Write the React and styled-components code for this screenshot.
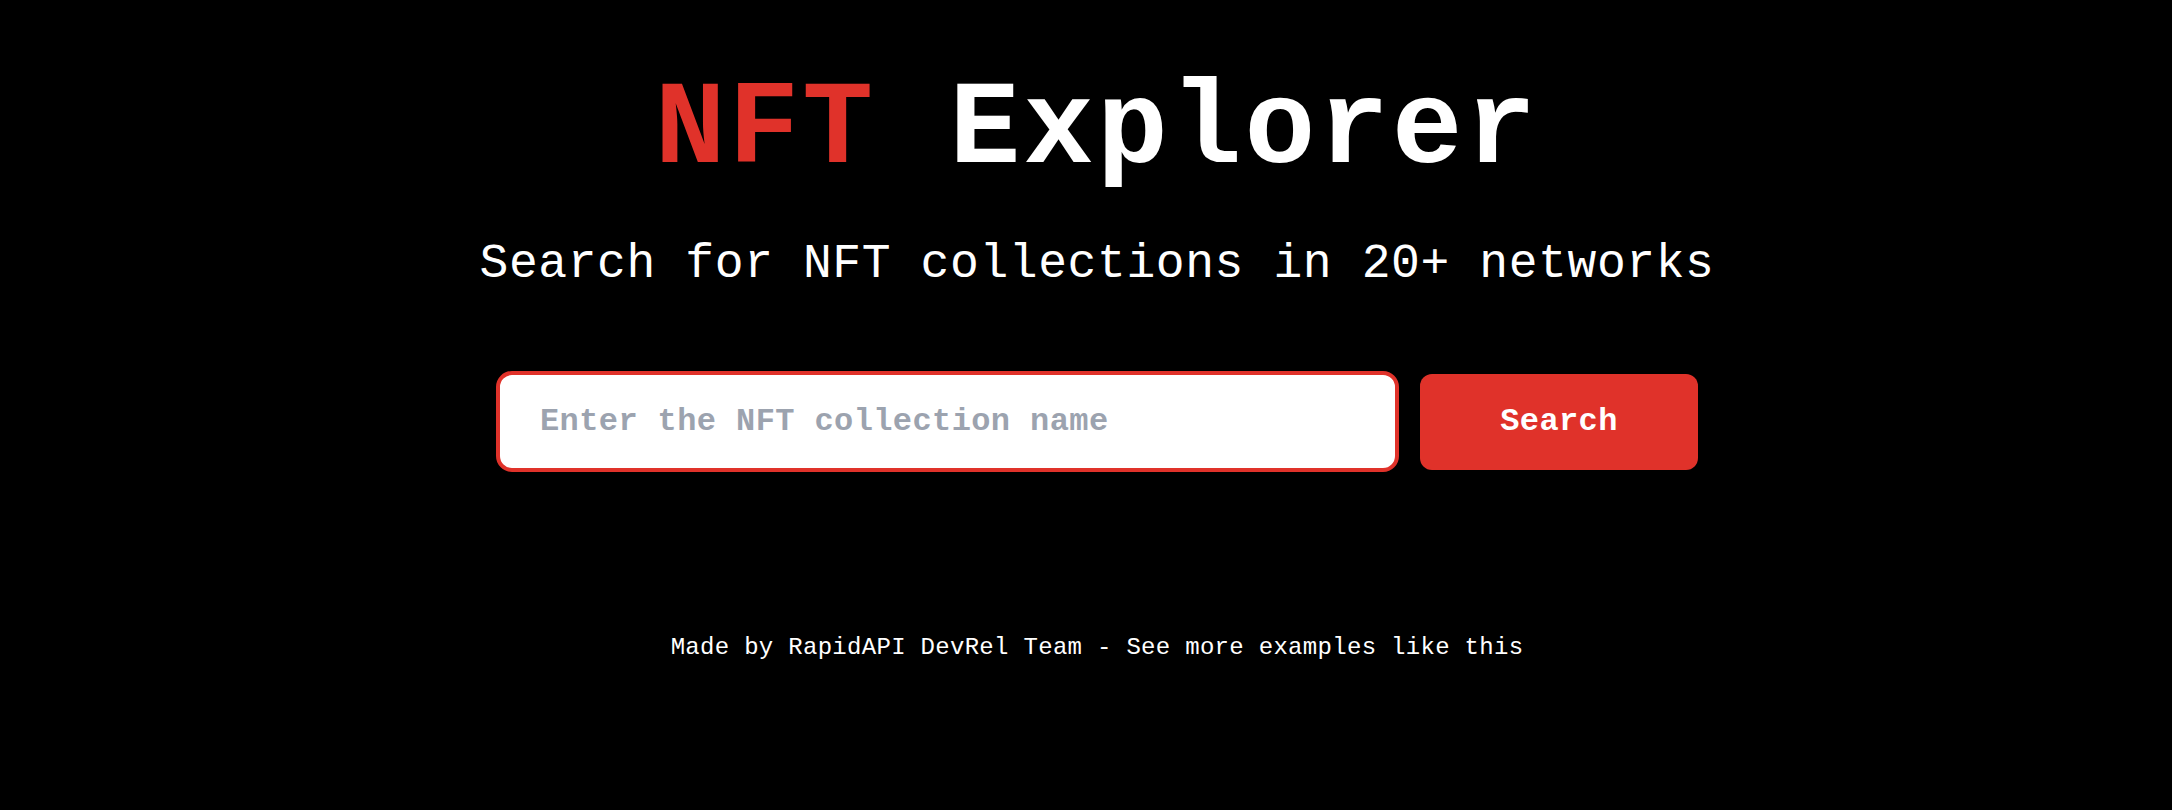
import React from "react";
import styled, { createGlobalStyle } from "styled-components";

const GlobalStyle = createGlobalStyle`
  html, body {
    margin: 0;
    padding: 0;
    background: #000;
  }
  body {
    font-family: "Liberation Mono", "DejaVu Sans Mono", monospace;
    color: #fff;
  }
`;

const RED = "#e0322a";

const Page = styled.main`
  min-height: 100vh;
  box-sizing: border-box;
  display: flex;
  flex-direction: column;
  align-items: center;
  padding: 72px 0 0 22px;
  background: #000;
`;

const Title = styled.h1`
  margin: 0;
  font-size: 118px;
  line-height: 1;
  font-weight: 700;
  letter-spacing: 2.9px;
  color: #fff;
  white-space: nowrap;
`;

const Accent = styled.span`
  color: ${RED};
`;

const Subtitle = styled.p`
  margin: 50px 0 0;
  font-size: 48px;
  line-height: 1;
  font-weight: 400;
  letter-spacing: 0.6px;
  white-space: nowrap;
`;

const SearchRow = styled.form`
  margin-top: 83px;
  display: flex;
  align-items: center;
  gap: 21px;
`;

const SearchInput = styled.input`
  box-sizing: border-box;
  width: 903px;
  height: 101px;
  padding: 0 40px;
  border: 4px solid ${RED};
  border-radius: 16px;
  background: #fff;
  font-family: "Liberation Mono", "DejaVu Sans Mono", monospace;
  font-size: 32px;
  font-weight: 700;
  letter-spacing: 0.4px;
  color: #111;
  outline: none;

  &::placeholder {
    color: #9ca3af;
    opacity: 1;
  }
`;

const SearchButton = styled.button`
  box-sizing: border-box;
  width: 278px;
  height: 96px;
  border: none;
  border-radius: 12px;
  background: ${RED};
  color: #fff;
  font-family: "Liberation Mono", "DejaVu Sans Mono", monospace;
  font-size: 32px;
  font-weight: 700;
  letter-spacing: 0.4px;
  cursor: pointer;
`;

const Footer = styled.footer`
  margin-top: 164px;
  font-size: 24px;
  line-height: 1;
  letter-spacing: 0.3px;
  white-space: nowrap;
`;

export default function App() {
  return (
    <>
      <GlobalStyle />
      <Page>
        <Title>
          <Accent>NFT</Accent> Explorer
        </Title>
        <Subtitle>Search for NFT collections in 20+ networks</Subtitle>
        <SearchRow onSubmit={(e) => e.preventDefault()}>
          <SearchInput placeholder="Enter the NFT collection name" />
          <SearchButton type="submit">Search</SearchButton>
        </SearchRow>
        <Footer>Made by RapidAPI DevRel Team - See more examples like this</Footer>
      </Page>
    </>
  );
}
